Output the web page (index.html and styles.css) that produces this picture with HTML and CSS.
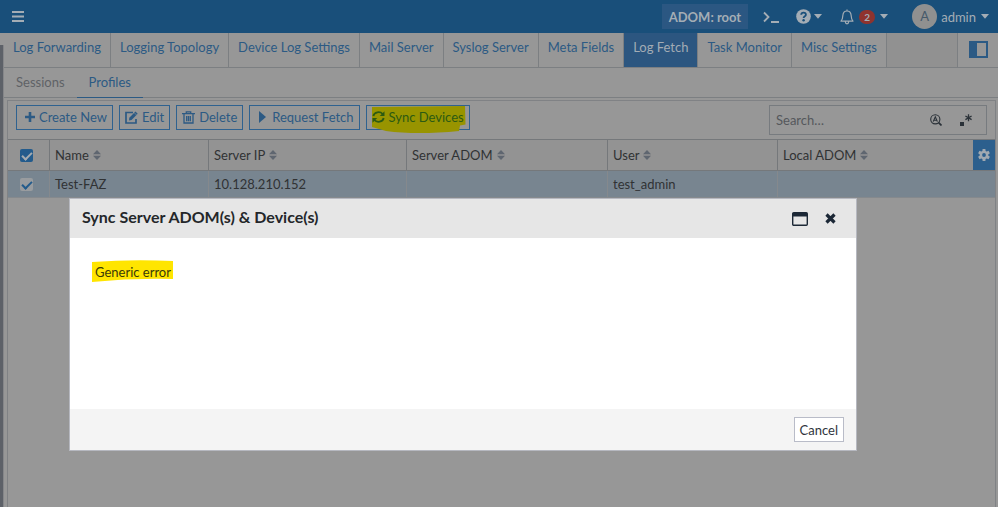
FILE: index.html
```html
<!DOCTYPE html>
<html lang="en">
<head>
<meta charset="utf-8">
<title>Log Fetch - Profiles</title>
<link rel="stylesheet" href="styles.css">
</head>
<body>
<svg class="defs" aria-hidden="true">
  <symbol id="sort" viewBox="0 0 8 10"><path d="M4 0 8 4.300H0zM4 10 0 5.700H8z" fill="currentColor"/></symbol>
  <symbol id="caret" viewBox="0 0 8 5"><path d="M0 0H8L4 4.800z" fill="currentColor"/></symbol>
</svg>
<header class="topbar">
  <button class="icon-btn" aria-label="Menu"><svg width="12" height="11" viewBox="0 0 12 11"><path d="M0 1H12M0 5.500H12M0 10H12" stroke="currentColor" stroke-width="1.800"/></svg></button>
  <div class="top-right">
    <button class="adom">ADOM: root</button>
    <button class="icon-btn cli" aria-label="CLI console"><svg width="16" height="12" viewBox="0 0 16 12"><path d="M1 1.500 5.500 6 1 10.500M8 11H16" fill="none" stroke="currentColor" stroke-width="1.800"/></svg></button>
    <button class="icon-btn help" aria-label="Help"><svg width="15" height="15" viewBox="0 0 15 15"><circle cx="7.500" cy="7.500" r="7.300" fill="currentColor"/><path d="M5.200 5.700C5.300 3 9.900 3 9.900 5.700 9.900 7.400 7.600 7.300 7.600 9.100" fill="none" stroke="#194f7a" stroke-width="1.800"/><circle cx="7.600" cy="11.200" r="1.200" fill="#194f7a"/></svg><svg width="8" height="5"><use href="#caret"/></svg></button>
    <button class="icon-btn bell" aria-label="Notifications"><svg width="14" height="16" viewBox="0 0 14 16"><path d="M7 .5V2M1 12.200C2.700 10.500 2.700 9 2.800 6.800 3 3.600 4.800 2 7 2S11 3.600 11.200 6.800C11.300 9 11.300 10.500 13 12.200ZM5.300 12.800C5.500 15.500 8.500 15.500 8.700 12.800" fill="none" stroke="currentColor" stroke-width="1.200" stroke-linejoin="round"/></svg><span class="badge">2</span><svg width="8" height="5"><use href="#caret"/></svg></button>
    <button class="icon-btn user"><span class="avatar">A</span><span>admin</span><svg width="8" height="5"><use href="#caret"/></svg></button>
  </div>
</header>
<div class="shell">
  <div class="rail"></div>
  <main class="main">
    <nav class="tabs">
      <a href="#">Log Forwarding</a><a href="#">Logging Topology</a><a href="#">Device Log Settings</a><a href="#">Mail Server</a><a href="#">Syslog Server</a><a href="#">Meta Fields</a><a href="#" class="active">Log Fetch</a><a href="#">Task Monitor</a><a href="#">Misc Settings</a>
      <span class="spacer"></span>
      <button class="panel-btn" aria-label="Toggle panel"><svg width="19" height="17" viewBox="0 0 19 17"><path d="M0 0H19V17H0zM8 2V15H17V2z" fill="currentColor" fill-rule="evenodd"/></svg></button>
    </nav>
    <nav class="subtabs"><a href="#" class="muted">Sessions</a><a href="#" class="current">Profiles</a></nav>
    <section class="panel">
      <div class="toolbar">
        <button class="btn create"><svg width="10" height="10" viewBox="0 0 10 10"><path d="M5 0V10M0 5H10" stroke="currentColor" stroke-width="2.600"/></svg>Create New</button>
        <button class="btn"><svg width="13" height="13" viewBox="0 0 13 13"><path d="M8 1.500H1V12H11V8" fill="none" stroke="currentColor" stroke-width="1.700"/><path d="M4 9.500 4.300 6.800 10.500.5 12.700 2.700 6.500 9z" fill="currentColor"/><path d="M9.300 1.800 11.500 4" stroke="#979797" stroke-width=".6"/></svg>Edit</button>
        <button class="btn"><svg width="13" height="13" viewBox="0 0 13 13"><path d="M0 2.700H13M4.300 2.500V.8H8.700V2.500M2 3V12H11V3M4.700 5V10.300M6.500 5V10.300M8.300 5V10.300" fill="none" stroke="currentColor" stroke-width="1.300"/></svg>Delete</button>
        <button class="btn fetch"><svg width="7" height="12" viewBox="0 0 7 12"><path d="M0 0 7 6 0 12z" fill="currentColor"/></svg>Request Fetch</button>
        <button class="btn sync"><svg class="marker" viewBox="0 0 94 27" preserveAspectRatio="none"><path d="M0 1 93 0 93.500 18.500 88 19.500 87 25Q45 29 14 25L0 21z" fill="#989400"/></svg><svg width="13" height="12" viewBox="0 0 13 12"><path d="M1.300 5C2.300.8 8 .1 10.700 3M11.700 7C10.700 11.200 5 11.900 2.300 9" fill="none" stroke="currentColor" stroke-width="1.800"/><path d="M12.500.3V5H7.800zM.5 11.700V7H5.200z" fill="currentColor"/></svg><span>Sync Devices</span></button>
        <div class="search">
          <input type="text" placeholder="Search…" aria-label="Search">
          <button class="icon-btn" aria-label="Match case"><svg width="12" height="12" viewBox="0 0 12 12"><circle cx="5.300" cy="5.300" r="4.600" fill="none" stroke="currentColor" stroke-width="1.100"/><path d="M8.600 8.600 11.500 11.500" stroke="currentColor" stroke-width="1.700"/><path d="M3.200 7.600 5.300 2.800 7.400 7.600M4 6.200H6.600" fill="none" stroke="currentColor" stroke-width="1.100"/></svg></button>
          <button class="icon-btn" aria-label="Regular expression"><svg width="12" height="12" viewBox="0 0 12 12"><path d="M0 8H4V12H0z" fill="currentColor"/><path d="M8.500.3V7.300M5.400 2 11.600 5.600M11.600 2 5.400 5.600" stroke="currentColor" stroke-width="1.300"/></svg></button>
        </div>
      </div>
      <table class="grid">
        <colgroup><col class="c-check"><col class="c-name"><col class="c-ip"><col class="c-adom"><col class="c-user"><col><col class="c-gear"></colgroup>
        <thead><tr>
          <th class="check"><input type="checkbox" class="all" checked aria-label="Select all"></th>
          <th>Name<svg width="8" height="10"><use href="#sort"/></svg></th>
          <th>Server IP<svg width="8" height="10"><use href="#sort"/></svg></th>
          <th>Server ADOM<svg width="8" height="10"><use href="#sort"/></svg></th>
          <th>User<svg width="8" height="10"><use href="#sort"/></svg></th>
          <th>Local ADOM<svg width="8" height="10"><use href="#sort"/></svg></th>
          <th class="gear"><button class="icon-btn" aria-label="Column settings"><svg width="12" height="12" viewBox="-6 -6 12 12"><g fill="currentColor"><circle r="4.300"/><path id="t" d="M-1.400-6H1.400L1.700-3H-1.700zM-1.400 6H1.400L1.700 3H-1.700z"/><use href="#t" transform="rotate(60)"/><use href="#t" transform="rotate(120)"/></g><circle r="1.900" fill="#2c5f8d"/></svg></button></th>
        </tr></thead>
        <tbody><tr>
          <td class="check"><input type="checkbox" checked aria-label="Select Test-FAZ"></td>
          <td>Test-FAZ</td><td>10.128.210.152</td><td></td><td>test_admin</td><td colspan="2"></td>
        </tr></tbody>
      </table>
    </section>
  </main>
</div>
<div class="dialog" role="dialog" aria-labelledby="dlg-title">
  <div class="dlg-head">
    <h2 id="dlg-title">Sync Server ADOM(s) &amp; Device(s)</h2>
    <button class="icon-btn" aria-label="Maximize"><svg width="16" height="14" viewBox="0 0 16 14"><rect x=".7" y=".7" width="14.600" height="12.600" rx="1" fill="none" stroke="currentColor" stroke-width="1.400"/><path d="M1 1H15V4.500H1z" fill="currentColor"/></svg></button>
    <button class="icon-btn" aria-label="Close"><svg width="11" height="11" viewBox="0 0 11 11"><path d="M1.500 1.500 9.500 9.500M9.500 1.500 1.500 9.500" stroke="currentColor" stroke-width="3.200"/></svg></button>
  </div>
  <div class="dlg-body"><p class="error"><svg class="marker" viewBox="0 0 81 22" preserveAspectRatio="none"><path d="M0 2Q40-1 81 1V19Q40 18 0 22z" fill="#ffe500"/></svg><span>Generic error</span></p></div>
  <div class="dlg-foot"><button class="cancel">Cancel</button></div>
</div>
</body>
</html>
```
FILE: styles.css
```css
* { box-sizing: border-box; }
body {
  margin: 0;
  min-height: 100vh;
  display: flex;
  flex-direction: column;
  background: #979797;
  color: #303234;
  font: 13px/20px Lato, "Liberation Sans", sans-serif;
}
button, input { font: inherit; color: inherit; }
a { color: #2c5a84; text-decoration: none; }
.defs { position: absolute; width: 0; height: 0; }
.icon-btn {
  display: flex;
  align-items: center;
  padding: 0;
  border: 0;
  background: none;
}
svg { flex: none; }

.topbar {
  display: flex;
  align-items: center;
  justify-content: space-between;
  height: 33px;
  padding: 0 9px 0 12px;
  background: #194f7a;
  color: #a4adb5;
}
.top-right { display: flex; align-items: center; }
.adom {
  height: 25px;
  padding: 0 7px;
  border: 0;
  background: #2b5782;
  font-weight: 700;
}
.cli { margin-left: 15px; }
.help { gap: 3px; margin-left: 17px; }
.bell { gap: 5px; margin-left: 18px; }
.badge {
  width: 16px;
  border-radius: 8px;
  background: #8f332e;
  font-size: 10px;
  line-height: 14px;
  font-weight: 700;
}
.user { gap: 4px; margin-left: 24px; }
.user svg { margin-left: 1px; }
.avatar {
  width: 25px;
  border-radius: 50%;
  background: #909090;
  color: #46596a;
  line-height: 25px;
}

.shell { flex: 1; display: flex; }
.rail {
  width: 4px;
  margin-top: 12px;
  background: #5d6168;
  border-right: 1px solid #858689;
}
.main { flex: 1; display: flex; flex-direction: column; min-width: 0; }

.tabs {
  display: flex;
  height: 35px;
  border-bottom: 1px solid #7c7f82;
}
.tabs a {
  padding: 4px 9px;
  border-right: 1px solid #7c7f82;
  white-space: nowrap;
}
.tabs .active { background: #2c5680; color: #a3acb5; }
.spacer { flex: 1; background: #919191; }
.panel-btn {
  width: 41px;
  padding: 4px 0 0;
  border: 0;
  border-left: 1px solid #7c7f82;
  background: none;
  color: #2c5a84;
}
.subtabs {
  display: flex;
  height: 30px;
  border-bottom: 1px solid #7c7f82;
}
.subtabs a { padding: 4px 12px; }
.subtabs .muted { color: #5f6266; }
.subtabs .current {
  margin-bottom: -1px;
  border-bottom: 1px solid #2c5a84;
}

.panel {
  flex: 1;
  margin: 2px 2px 0 3px;
  border: 1px solid #808285;
  border-bottom: 0;
}
.toolbar {
  display: flex;
  align-items: center;
  gap: 6px;
  height: 38px;
  padding: 0 8px;
}
.btn {
  position: relative;
  display: flex;
  align-items: center;
  gap: 4px;
  height: 25px;
  margin-bottom: 6px;
  padding: 0 5px;
  border: 1px solid #2f6290;
  background: none;
  color: #2c5a84;
  white-space: nowrap;
}
.btn svg { position: relative; }
.create { padding: 0 5px 0 8px; }
.fetch { gap: 6px; padding: 0 5px 0 9px; }
.sync { color: #2c5a12; }
.btn .marker {
  position: absolute;
  left: 5px;
  top: 0;
  width: 94px;
  height: 27px;
}
.sync span, .error span { position: relative; }
.search {
  display: flex;
  align-items: center;
  gap: 18px;
  width: 218px;
  height: 30px;
  margin-left: auto;
  padding: 0 14px 0 6px;
  border: 1px solid #777b7f;
  color: #2a3138;
}
.search input {
  flex: 1;
  min-width: 0;
  padding: 0;
  border: 0;
  outline: 0;
  background: none;
}
.search input::placeholder { color: #55585c; opacity: 1; }

.grid {
  width: 100%;
  table-layout: fixed;
  border-collapse: separate;
  border-spacing: 0;
}
.c-check { width: 42px; }
.c-name { width: 159px; }
.c-ip { width: 198px; }
.c-adom { width: 201px; }
.c-user { width: 170px; }
.c-gear { width: 22px; }
th {
  height: 32px;
  padding: 0 5px;
  border: 1px solid #75787b;
  border-left: 0;
  background: #939393;
  font-weight: 400;
  text-align: left;
}
th:nth-last-child(-n+2) { border-right: 0; }
th svg { margin-left: 4px; color: #5f6670; }
td {
  height: 27px;
  padding: 0 5px;
  border-right: 1px solid #85898d;
  border-bottom: 1px solid #85898d;
  background: #788590;
}
td:last-child { border-right: 0; }
.check { padding: 0 0 0 12px; }
.check input {
  appearance: none;
  display: block;
  width: 13px;
  height: 13px;
  margin: 0;
  border-radius: 2px;
  background: #999c9f;
}
.check input::before {
  content: "";
  display: block;
  width: 8px;
  height: 4px;
  margin: 3px 2px;
  border: solid #235b8c;
  border-width: 0 0 2px 2px;
  transform: rotate(-45deg);
}
.check .all { background: #235b8c; }
.check .all::before { border-color: #a5abb0; }
.gear { padding: 0; background: #2c5f8d; color: #a0a9b1; }
.gear button { margin: auto; }
.gear svg { margin: 0; color: inherit; }

.dialog {
  position: absolute;
  top: 198px;
  left: 69px;
  right: 141px;
  border: 1px solid #b6b8c0;
  background: #fff;
}
.dlg-head {
  display: flex;
  align-items: center;
  gap: 17px;
  height: 39px;
  padding: 0 20px 0 12px;
  background: #e6e6e6;
  color: #1c2836;
}
.dlg-head h2 {
  flex: 1;
  margin: 0;
  padding-bottom: 4px;
  color: #24272a;
  font-size: 16px;
  line-height: 20px;
}
.dlg-body { height: 171px; padding: 24px 25px; }
.error { position: relative; width: max-content; margin: 0; color: #3a3a08; }
.error .marker {
  position: absolute;
  left: -3px;
  top: -2px;
  width: 81px;
  height: 22px;
}
.dlg-foot {
  display: flex;
  justify-content: flex-end;
  padding: 8px 12px;
  background: #f4f4f4;
}
.cancel {
  height: 25px;
  padding: 0 5px;
  border: 1px solid #b9bcc8;
  background: #fff;
  color: #30343c;
}
```
